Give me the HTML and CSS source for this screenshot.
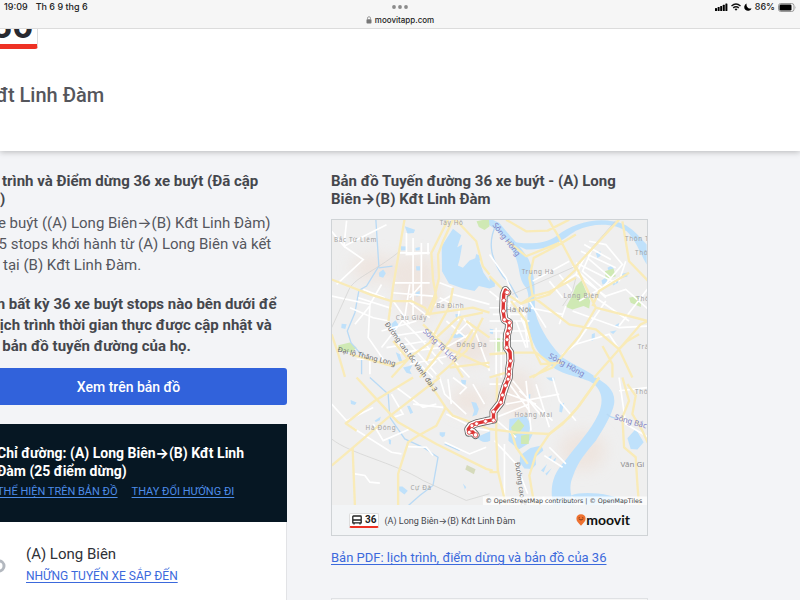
FILE: index.html
```html
<!DOCTYPE html>
<html lang="vi">
<head>
<meta charset="utf-8">
<meta name="viewport" content="width=device-width, initial-scale=1">
<title>36 xe buýt</title>
<link rel="stylesheet" href="styles.css">
</head>
<body>
<header class="browser">
  <div class="status">
    <div class="status-left"><span>19:09</span><span>Th 6 9 thg 6</span></div>
    <svg class="dots" viewBox="0 0 16 4"><circle cx="2" cy="2" r="1.9"/><circle cx="8" cy="2" r="1.9"/><circle cx="14" cy="2" r="1.9"/></svg>
    <div class="status-right">
      <svg width="13" height="8" viewBox="0 0 13 8"><rect x="0" y="5" width="2" height="3" rx=".5"/><rect x="2.6" y="4" width="2" height="4" rx=".5"/><rect x="5.2" y="3" width="2" height="5" rx=".5"/><rect x="7.8" y="1.8" width="2" height="6.2" rx=".5"/><rect x="10.4" y=".5" width="2" height="7.5" rx=".5"/></svg>
      <svg width="10" height="8" viewBox="0 0 10 8"><path d="M.5 3Q5-1 9.500 3M2.200 4.900Q5 2.500 7.800 4.900" fill="none" stroke="#111" stroke-width="1.400"/><path d="M3.500 6.100Q5 4.900 6.500 6.100L5 7.700Z"/></svg>
      <svg width="8" height="8" viewBox="0 0 8 8"><path d="M2.700.5A3.800 3.800 0 1 0 7.600 5.400A3.900 3.900 0 0 1 2.700.5Z"/></svg>
      <span>86%</span>
      <svg width="18" height="9" viewBox="0 0 18 9"><rect x=".5" y=".5" width="15.500" height="8" rx="2.300" fill="none" stroke="#999"/><rect x="1.500" y="1.500" width="12" height="6" rx="1.300"/><path d="M17 3Q18 4.500 17 6Z" fill="#999"/></svg>
    </div>
  </div>
  <div class="address">
    <svg width="6" height="8" viewBox="0 0 6 8"><rect x=".5" y="3.300" width="5" height="4.200" rx=".8" fill="#777"/><path d="M1.500 3.500V2.200Q1.500.7 3 .7T4.500 2.200V3.500" fill="none" stroke="#888" stroke-width=".8"/></svg>
    <span>moovitapp.com</span>
  </div>
</header>

<div class="page">
  <section class="hero">
    <div class="line-badge">36</div>
    <h1>Kđt Linh Đàm</h1>
  </section>

  <main class="columns">
    <section>
      <h2>Lịch trình và Điểm dừng 36 xe buýt (Đã cập nhật)</h2>
      <p>36 xe buýt ((A) Long Biên→(B) Kđt Linh Đàm) có 25 stops khởi hành từ (A) Long Biên và kết thúc tại (B) Kđt Linh Đàm.</p>
      <p class="strong">Chọn bất kỳ 36 xe buýt stops nào bên dưới để tìm lịch trình thời gian thực được cập nhật và xem bản đồ tuyến đường của họ.</p>
      <button class="view-map" type="button">Xem trên bản đồ</button>
      <div class="route">
        <div class="route-head">
          <h3>Chỉ đường: (A) Long Biên→(B) Kđt Linh Đàm (25 điểm dừng)</h3>
          <nav><a href="#">THỂ HIỆN TRÊN BẢN ĐỒ</a><a href="#">THAY ĐỔI HƯỚNG ĐI</a></nav>
        </div>
        <ul class="stops">
          <li>
            <svg class="stop-dot" viewBox="0 0 14 14"><circle cx="7" cy="7" r="5"/></svg>
            <div><h4>(A) Long Biên</h4><a href="#">NHỮNG TUYẾN XE SẮP ĐẾN</a></div>
          </li>
        </ul>
      </div>
    </section>

    <section>
      <h2>Bản đồ Tuyến đường 36 xe buýt - (A) Long Biên→(B) Kđt Linh Đàm</h2>
      <figure class="map">
        <svg class="map-art" viewBox="6 6 948 858">
          <defs>
            <filter id="haze" x="-30%" y="-30%" width="160%" height="160%"><feGaussianBlur stdDeviation="22"/></filter>
          </defs>
          <rect width="960" height="960" fill="#efefef"/>
          <g fill="#eee1d9" opacity=".7" filter="url(#haze)">
            <ellipse cx="130" cy="150" rx="65" ry="40"/><ellipse cx="250" cy="170" rx="75" ry="60"/><ellipse cx="270" cy="250" rx="60" ry="50"/><ellipse cx="420" cy="390" rx="70" ry="50"/><ellipse cx="420" cy="550" rx="60" ry="40"/><ellipse cx="560" cy="530" rx="60" ry="70"/><ellipse cx="760" cy="700" rx="70" ry="60"/>
          </g>
          <!-- water -->
          <g fill="#bfe1fb">
            <path d="M370 32L395 52L383 88L398 80L390 125L385 143L400 150L420 128L437 121L440 108L455 115L450 130L462 165L480 190L496 194V206L480 212L448 205L435 220L400 212L358 197L337 160L336 85Z"/>
            <path d="M225 25L256 35L252 45L233 47ZM212 85L230 86V97L214 98ZM257 90L270 87V97L258 98ZM259 145H271V158H260ZM147 165L160 155L168 166L160 180L148 176ZM257 225L270 219V234L260 236ZM185 318L197 308L209 326L196 338L187 332ZM35 318L50 320L46 334L34 331ZM377 290L392 288V300L380 304ZM364 350L403 348L400 358L373 362ZM198 404L210 410L217 430L208 432ZM220 450L248 443L240 458L246 470L230 466Z"/>
            <path d="M62 548L80 555L75 563L63 560ZM232 566L240 565L250 585L242 590ZM134 610L153 597L150 609L138 614ZM176 665L184 668L183 682L178 680ZM330 645L347 645L345 656L338 660L330 653ZM207 808L218 808L234 821L224 832L208 820ZM394 487L410 488L408 502L397 500ZM425 553L440 556L448 575L442 592L428 597L434 580ZM400 799L410 810L406 816ZM441 660L482 642V670Q460 682 441 660Z"/>
            <path d="M478 0L510 15C550 65 575 85 598 125C622 180 613 225 618 285C630 335 670 390 700 420C740 446 775 458 800 480C835 500 860 520 855 560C850 590 820 640 800 670C770 705 745 735 732 775C718 805 722 835 738 866H672C660 810 670 770 708 730C745 680 785 640 808 590C822 555 822 525 795 500C770 480 705 475 672 450C630 420 600 370 595 310C590 275 606 240 590 210C565 180 575 155 555 110C535 70 510 40 478 20Z"/>
            <path d="M538 70C590 80 645 80 681 55C730 15 800 0 850 10C900 15 925 50 953 80V140C935 110 923 70 893 40C860 18 800 10 740 38C690 70 670 95 590 95Z"/>
            <path d="M725 835C765 820 850 830 900 855L770 866Z"/>
            <path d="M800 106L814 100V114L805 120ZM817 188L835 175L833 196L820 200ZM835 150L848 143L854 155L840 163ZM848 192L865 180L867 195L852 203ZM878 168L895 164V176L880 180ZM788 350L797 346V365L787 370ZM842 342L863 338L852 349ZM855 324L870 316L868 327ZM480 178L495 188L494 206L480 210ZM481 333L492 335L490 350L481 347ZM692 560L705 556L698 585L690 583ZM650 480H675V492L660 488ZM598 531L603 530L602 548L598 546Z"/>
            <path d="M572 715L603 692L636 685L642 700L618 720L620 742L608 755L585 754L571 735ZM540 605L590 596L603 620L600 645L610 650L595 680L568 697L537 670ZM655 720L668 714L663 730ZM670 730L681 720L676 738ZM635 760L653 740L643 765ZM648 770L667 753L652 775ZM895 663L920 635L944 675L925 697L905 695Z"/>
          </g>
          <g fill="#cfe9b4">
            <path d="M441 10L478 2L480 25L465 36L448 27ZM25 383L60 375L80 390L65 405L25 398ZM740 205L757 188L770 220L783 250L780 272L763 265L730 275L710 268L728 235ZM827 160L853 152L860 175L830 186ZM900 240L923 235L937 252L935 268L905 255ZM496 362H520V402H496Z"/>
            <path d="M545 630L567 605L585 625L570 645L552 655ZM575 655L600 650L598 680L575 680Z"/>
            <path d="M412 743L438 756L433 771L407 757Z" fill="#d5dabb"/>
          </g>
          <g fill="none" stroke="#b9daf5" stroke-width="4">
            <path d="M138 5L147 145L110 205L87 218L75 285L52 340L63 375L95 412V470M147 150L188 145M500 20C470 80 490 130 520 175C550 200 550 220 565 240M120 480L175 530L180 600L225 665L280 690L325 720L310 805L270 835L235 866M833 590Q850 605 870 602M390 700L345 680"/>
          </g>
          <!-- minor streets -->
          <g fill="none" stroke="#fff" stroke-width="5">
            <path d="M50 8L42 85L5 40M42 85L100 125L20 200M42 85L170 20M5 235L120 260L155 200M60 270L130 300L178 310M75 320L120 265L115 360L160 425M85 240L185 272M100 215L165 240M230 45V110L300 105M250 60V300M275 75V260M295 75V110M210 105H300M195 195H300M188 225L310 235M190 250L240 320M240 200L225 300L155 390M275 200L240 240M235 250L300 300M330 195L370 210M310 265L370 230L480 260M330 240L390 270L385 310M210 300L260 350L340 440M190 355L290 340L420 480M155 340L260 310M200 370L310 480M225 360L320 470M170 390L290 370M210 405L330 390M240 440L380 410M285 465L320 430M310 340L350 400M400 300L440 350L480 460M350 310L410 360M330 400L420 350M420 310L380 350"/>
            <path d="M80 425H120V470M5 560L50 610L130 570M50 620L185 705L215 710M130 620L160 670L240 635M75 770L105 775L120 795L150 798M200 510L240 540L280 570L320 560M340 570L250 560M235 688L290 690L310 715M350 590L440 635L480 640M345 675L420 710L470 690M330 480L345 530L410 590M355 485L365 560M370 480L410 510L390 530M185 530L220 590L190 600M430 500L465 560"/>
            <path d="M480 110L530 180L545 220M480 220L530 260L560 250M500 245H540V480M560 240L580 270L595 390M480 270H580M490 290H590M480 310H600M480 340H600M480 370H600M500 330V470M515 350V480M530 330V480M560 310L590 390M575 300L615 400M600 250L650 330M610 190L720 130M640 235L740 170L770 110M660 190L700 240M690 170L730 220M730 145L830 240M740 135L860 195M755 100L860 150M765 80L845 125M780 70L830 80L880 140L820 210L760 160L790 90M775 120L845 180M750 250L870 180M800 240L900 310M710 265L690 320M730 280L870 330L958 325M870 325L958 210M740 170L830 235L890 215L958 275M890 130L870 190M600 270L700 290M830 250L740 380L700 410M740 380L840 350L870 395"/>
            <path d="M480 500H540L600 580M510 520L620 560M550 490L640 600M530 560L690 530M570 520L670 610M590 490L605 640M620 500L660 630M500 600L600 560M480 590L560 660M660 690L710 740M645 715L700 750M670 480L690 550L740 610M495 670L560 740L595 830M525 680V866M640 840L665 866M870 480L890 620L958 660M870 520L958 510"/>
          </g>
          <g fill="none" stroke="#d0d0ce" stroke-width="2">
            <path d="M210 100C130 165 70 180 55 220L5 330M5 665C60 710 190 735 280 790L410 850L480 830M548 230L740 145L860 8M700 265L730 220L740 180"/>
          </g>
          <!-- main roads -->
          <g fill="none" stroke="#f9ebb8" stroke-width="7" stroke-linejoin="round">
            <path d="M225 0L190 205L176 310M5 185L120 230L185 250L245 250L285 270L300 290L320 240L310 185L305 105L355 5M370 5L340 70L325 110L328 180L315 235L290 290L430 270L480 285M378 5L440 70L460 145L480 170M370 210L360 265L300 375L225 430L185 445L60 410M5 350L25 410L45 478M280 320L350 390L480 450M190 370L235 425L185 480M290 430L320 360L385 300L460 285M270 480L360 370L400 300M320 480L410 400L460 300M410 310L480 360M430 335L370 430L400 480M360 450L480 435"/>
            <path d="M80 480L140 545L205 615L320 680L470 755L490 760M5 745L70 690L175 600L330 480M45 620L135 550L250 480M50 620L80 640M295 490L348 570L370 595L480 635L560 645L660 650L700 620L745 570L810 480M348 570L320 625L265 655L235 675L205 770V866M68 692L75 866"/>
            <path d="M480 175L535 230L575 258L660 230L740 155L690 60L655 0M575 258L610 235L660 222L740 180M610 235L600 180L613 120L690 80L740 50M740 145L870 5M535 70L590 115L690 75M530 5L590 40L655 38L720 5M740 145L800 270L958 310M800 270L750 355L670 450L600 480M880 10L900 130L958 190M900 165L810 220L790 265M615 240L720 320L800 335L870 395L935 320L958 310M870 395L910 480M870 395L795 480M870 395L895 370L930 350M545 250L590 310L610 390L635 440L700 435M480 410L550 405L620 405L665 440M665 440L610 480M480 480L530 465M820 385L850 440L850 480"/>
            <path d="M660 650L620 710L600 775L615 866M660 650L720 600L750 565L810 480M545 640L560 690L595 740M503 480L500 650L505 760L530 866M480 765H505M880 480L900 550L880 600L885 690L920 720L925 800L930 866M895 500L920 535L910 590L940 640L958 680"/>
          </g>
          <g class="place">
            <text x="330" y="21">Tây Hồ</text><text x="12" y="73">Bắc Từ Liêm</text><text x="320" y="270">Ba Đình</text><text x="198" y="308">Cầu Giấy</text><text x="381" y="387">Đống Đa</text><text x="107" y="639">Hà Đông</text><text x="242" y="820">Cự Đà</text><text x="577" y="169">Trung Hà</text><text x="703" y="242">Long Biên</text><text x="555" y="598">Hoàng Mai</text><text x="888" y="68">Thôn T</text><text x="918" y="111">Thô</text><text x="922" y="249">Thô</text><text x="926" y="395">Trâ</text><text x="918" y="530">Thô</text>
            <text x="529" y="283" class="city">Hà Nội</text><text x="874" y="750" class="city">Văn Gi</text>
          </g>
          <g class="river">
            <text transform="translate(278 342) rotate(44)">Sông Tô Lịch</text><text transform="translate(488 22) rotate(52)">Sông Hồng</text><text transform="translate(656 420) rotate(29)">Sông Hồng</text><text transform="translate(855 606) rotate(16)">Sông Bắc H</text>
          </g>
          <g class="road">
            <text transform="translate(22 402) rotate(14)">Đại lộ Thăng Long</text>
            <text transform="translate(164 320) rotate(54)">Đường cao tốc Vành đai 3</text>
            <text transform="translate(557 736) rotate(82)">Đường cao tố</text>
          </g>
          <!-- bus line 36 -->
          <g fill="none" stroke-linejoin="round" stroke-linecap="round">
            <path d="M533 224L528 217L523 230L522 248L521 280L525 306L539 315L538 332L533 350L532 372L532 390L542 404L543 430L539 455L538 480L528 505L519 533L514 555L492 583L492 607L470 611L440 618L424 625L416 636L418 646L430 644L438 653" stroke="#666" stroke-width="24"/>
            <path d="M533 224L528 217L523 230L522 248L521 280L525 306L539 315L538 332L533 350L532 372L532 390L542 404L543 430L539 455L538 480L528 505L519 533L514 555L492 583L492 607L470 611L440 618L424 625L416 636L418 646L430 644L438 653" stroke="#fff" stroke-width="19"/>
            <path d="M533 224L528 217L523 230L522 248L521 280L525 306L539 315L538 332L533 350L532 372L532 390L542 404L543 430L539 455L538 480L528 505L519 533L514 555L492 583L492 607L470 611L440 618L424 625L416 636L418 646L430 644L438 653" stroke="#dd3434" stroke-width="10"/>
          </g>
          <g fill="#fff" stroke="#dc5050" stroke-width="3"><circle cx="533" cy="224" r="7"/><circle cx="523" cy="248" r="6"/><circle cx="522" cy="280" r="6"/><circle cx="525" cy="306" r="6"/><circle cx="540" cy="315" r="6"/><circle cx="540" cy="332" r="6"/><circle cx="535" cy="348" r="6"/><circle cx="533" cy="366" r="6"/><circle cx="532" cy="390" r="6"/><circle cx="543" cy="430" r="6"/><circle cx="539" cy="454" r="6"/><circle cx="538" cy="470" r="6"/><circle cx="536" cy="485" r="6"/><circle cx="528" cy="504" r="6"/><circle cx="519" cy="533" r="6"/><circle cx="514" cy="555" r="6"/><circle cx="492" cy="583" r="6"/><circle cx="492" cy="609" r="6"/><circle cx="468" cy="612" r="6"/><circle cx="441" cy="619" r="6"/><circle cx="427" cy="625" r="6"/><circle cx="419" cy="645" r="6"/><circle cx="438" cy="653" r="7"/></g>
          <rect x="460" y="838" width="500" height="28" fill="#fff" opacity=".75"/>
          <text class="credit" x="468" y="857">© OpenStreetMap contributors | © OpenMapTiles</text>
        </svg>
        <figcaption>
          <span class="mini-badge"><svg width="10" height="10" viewBox="0 0 10 10"><path d="M1.500 1H8.500Q9.200 1 9.200 1.800V7.800H.8V1.800Q.8 1 1.500 1ZM1 5H9M2 7.500V9.500M8 7.500V9.500" fill="none" stroke="#222" stroke-width="1.300"/></svg>36</span>
          <span class="caption-text">(A) Long Biên→(B) Kđt Linh Đàm</span>
          <span class="logo"><svg width="10" height="12" viewBox="0 0 10 12"><path d="M5 .3C7.800.3 9.600 2.100 9.600 4.700C9.600 7.600 7.200 8.900 5 11.800C2.800 8.900.4 7.600.4 4.700C.4 2.100 2.200.3 5 .3Z" fill="#ee7130"/><path d="M2.700 4.800Q5 7.300 7.300 4.800" fill="none" stroke="#783714" stroke-width=".9"/><circle cx="3.200" cy="3.500" r=".5" fill="#783714"/><circle cx="6.800" cy="3.500" r=".5" fill="#783714"/></svg>moovit</span>
        </figcaption>
      </figure>
      <a class="pdf" href="#">Bản PDF: lịch trình, điểm dừng và bản đồ của 36</a>
      <div class="next-box"></div>
    </section>
  </main>
</div>
</body>
</html>
```
FILE: styles.css
```css
* { box-sizing: border-box; }
body {
  margin: 0;
  height: 100vh;
  overflow: hidden;
  display: flex;
  flex-direction: column;
  background: #f3f4f7;
  color: #45474d;
  font-family: Roboto, Inter, sans-serif;
}
h1, h2, h3, h4, p, ul, figure { margin: 0; padding: 0; }

.browser {
  flex: none;
  height: 29px;
  background: #f6f6f6;
  border-bottom: 1px solid #dcdcdc;
  color: #222;
  font: 500 9px/12px Inter, sans-serif;
}
.status {
  display: grid;
  grid-template-columns: 1fr 16px 1fr;
  align-items: center;
  height: 14px;
  padding: 0 4px;
}
.status-left { display: flex; gap: 8px; }
.status-right { display: flex; gap: 3px; align-items: center; justify-content: flex-end; }
.dots { width: 16px; height: 4px; fill: #8a8a8a; }
.address { display: flex; justify-content: center; align-items: center; gap: 3px; height: 12px; font-size: 8px; }

.page { flex: 1; min-height: 0; overflow: hidden; }
.hero {
  height: 122px;
  overflow: hidden;
  background: #fff;
  box-shadow: 0 1px 6px rgba(0, 0, 0, .25);
}
.line-badge {
  display: flex;
  justify-content: flex-end;
  align-items: flex-end;
  width: 68px;
  height: 50px;
  margin: -30px 0 0 -30px;
  padding: 0 4px;
  border: 1px solid #ddd;
  border-bottom: 5px solid #ee3124;
  border-radius: 3px;
  color: #292a30;
  font-size: 36px;
  font-weight: 700;
  line-height: 36px;
}
h1 {
  margin: 32px 0 0 -17px;
  color: #55565c;
  font-size: 20px;
  font-weight: 500;
  line-height: 28px;
}

.columns {
  display: grid;
  grid-template-columns: 1fr 1fr;
  gap: 44px;
  margin: 21px 19% 0 -30px;
}
h2 { font-size: 15px; font-weight: 700; line-height: 18px; }
p { margin-top: 5px; color: #55575e; font-size: 15px; line-height: 21px; }
.strong { margin-top: 18px; color: #45474d; font-weight: 700; }
a { color: #3b69dc; text-underline-offset: 2px; }
.view-map {
  display: block;
  width: 100%;
  height: 37px;
  margin-top: 11px;
  border: 0;
  border-radius: 3px;
  background: #3162db;
  color: #fff;
  font: 500 14px/18px Roboto, sans-serif;
}
.route { margin-top: 19px; border-right: 1px solid #e2e3e6; background: #fff; }
.route-head {
  height: 98px;
  margin-right: -1px;
  padding: 20px 27px 0;
  background: #061723;
}
h3 { color: #fff; font-size: 14px; font-weight: 700; line-height: 18px; }
nav { display: flex; gap: 14px; margin-top: 4px; font-size: 11px; line-height: 16px; white-space: nowrap; }
nav a { color: #4d8ce8; }
.stops { list-style: none; }
.stops li { display: flex; align-items: center; gap: 20px; padding: 22px 22px 40px; }
.stop-dot { flex: none; width: 14px; height: 14px; fill: #fff; stroke: #b3b8bf; stroke-width: 3; }
h4 { color: #2f3137; font-size: 15px; font-weight: 400; line-height: 21px; }
.stops a { display: block; font-size: 12px; line-height: 22px; }

.map { margin-top: 11px; border: 1px solid #cfd3d6; background: #f2f4f6; }
.map-art { display: block; width: 100%; }
.place { fill: #a3a3a3; font: 19px "Noto Sans", sans-serif; letter-spacing: 2px; }
.city { fill: #8f8f8f; font-size: 24px; letter-spacing: 0; }
.river { fill: #8181c5; font: 23px "Noto Sans", sans-serif; }
.road { fill: #6c6c6c; font: 21px "Noto Sans", sans-serif; }
.credit { fill: #444; font: 19px "DejaVu Sans", sans-serif; }
figcaption { display: flex; align-items: center; height: 30px; padding: 0 17px; }
.mini-badge {
  display: flex;
  align-items: center;
  gap: 3px;
  height: 15px;
  padding: 0 2px;
  border: 1px solid #ddd;
  border-bottom: 2px solid #ee3124;
  border-radius: 2px;
  background: #fff;
  color: #222;
  font-size: 10px;
  font-weight: 700;
}
.caption-text { margin-left: 5px; font-size: 9px; white-space: nowrap; }
.logo {
  display: flex;
  align-items: center;
  margin-left: auto;
  color: #111;
  font: 700 14px/16px Lato, sans-serif;
}
.pdf { display: block; margin-top: 12px; font-size: 13px; line-height: 20px; white-space: nowrap; }
.next-box { height: 40px; margin-top: 30px; border: 1px solid #dfe1e4; background: #f6f6f6; }
```
